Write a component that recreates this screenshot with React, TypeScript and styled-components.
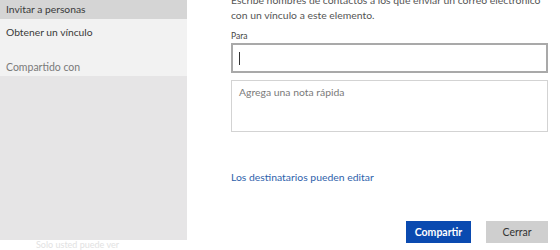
import styled, { createGlobalStyle } from 'styled-components';

const font = `Lato, 'Noto Sans', sans-serif`;

const GlobalStyle = createGlobalStyle`
    html, body {
        margin: 0;
        padding: 0;
        background: #ffffff;
    }
    body {
        font-family: ${font};
        color: #333333;
    }
`;

const navItems = [
    { label: 'Invitar a personas', active: true },
    { label: 'Obtener un vínculo', active: false },
];

const Wrapper = styled.div`
    display: flex;
    width: 560px;
    height: 250px;
    overflow: hidden;
`;

const Sidebar = styled.aside`
    width: 187px;
    flex-shrink: 0;
    display: flex;
    flex-direction: column;
    background-color: #f2f2f2;
`;

const Nav = styled.ul`
    list-style: none;
    margin: 0;
    padding: 0;
`;

const NavItem = styled.li<{ $active?: boolean }>`
    height: 19px;
    line-height: 19px;
    margin-bottom: ${({ $active }) => ($active ? '4px' : '0')};
    padding-left: 6px;
    font-size: 10.3px;
    color: #3a3a3a;
    background-color: ${({ $active }) => ($active ? '#d5d5d5' : 'transparent')};
`;

const SectionTitle = styled.div`
    margin-top: 16px;
    height: 18px;
    line-height: 18px;
    padding-left: 6px;
    font-size: 10.5px;
    color: #7a7a7a;
`;

const SharedList = styled.div`
    height: 170px;
    background-color: #e6e5e6;
`;

const Footer = styled.div`
    flex: 1;
    padding-left: 36px;
    font-size: 9px;
    line-height: 10px;
    color: #e2e2e2;
    background-color: #ffffff;
`;

const Main = styled.main`
    flex: 1;
    display: flex;
    flex-direction: column;
    padding: 0 12px 0 44px;
    margin-top: -7px;
`;

const Intro = styled.p`
    margin: 0;
    font-size: 10.4px;
    line-height: 15px;
    color: #555555;
    white-space: nowrap;
`;

const Label = styled.div`
    margin-top: 7px;
    font-size: 8.5px;
    line-height: 12px;
    color: #444444;
`;

const Input = styled.div`
    margin-top: 1px;
    height: 30px;
    box-sizing: border-box;
    border: 2px solid #a9a9a9;
    display: flex;
    align-items: center;
    padding-left: 6px;
`;

const Caret = styled.span`
    width: 1px;
    height: 13px;
    background-color: #333333;
`;

const Note = styled.div`
    margin-top: 7px;
    height: 52px;
    box-sizing: border-box;
    border: 1px solid #d3d3d3;
    padding: 4px 7px;
    font-size: 10.4px;
    line-height: 15px;
    color: #7a7a7a;
`;

const Link = styled.a`
    margin-top: 38px;
    font-size: 10.4px;
    line-height: 14px;
    color: #2f62ab;
    cursor: pointer;
`;

const Actions = styled.div`
    margin-top: 37px;
    display: flex;
    justify-content: flex-end;
    gap: 15px;
`;

const Button = styled.button<{ $primary?: boolean }>`
    width: ${({ $primary }) => ($primary ? '65px' : '62px')};
    height: 22px;
    padding: 0;
    border: none;
    font-family: ${font};
    font-size: 10.5px;
    font-weight: ${({ $primary }) => ($primary ? 700 : 400)};
    color: ${({ $primary }) => ($primary ? '#ffffff' : '#333333')};
    background-color: ${({ $primary }) => ($primary ? '#0a4ab0' : '#cfcfcf')};
`;

export default function App() {
    return (
        <>
            <GlobalStyle />
            <Wrapper>
                <Sidebar>
                    <Nav>
                        {navItems.map((item) => (
                            <NavItem key={item.label} $active={item.active}>
                                {item.label}
                            </NavItem>
                        ))}
                    </Nav>
                    <SectionTitle>Compartido con</SectionTitle>
                    <SharedList />
                    <Footer>Solo usted puede ver</Footer>
                </Sidebar>
                <Main>
                    <Intro>
                        Escribe nombres de contactos a los que enviar un correo electrónico
                        <br />
                        con un vínculo a este elemento.
                    </Intro>
                    <Label>Para</Label>
                    <Input>
                        <Caret />
                    </Input>
                    <Note>Agrega una nota rápida</Note>
                    <Link>Los destinatarios pueden editar</Link>
                    <Actions>
                        <Button $primary>Compartir</Button>
                        <Button>Cerrar</Button>
                    </Actions>
                </Main>
            </Wrapper>
        </>
    );
}
